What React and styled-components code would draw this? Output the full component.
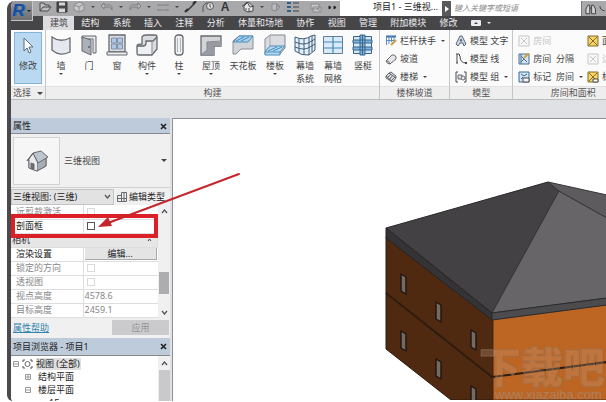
import React from 'react'
import styled, { createGlobalStyle, css } from 'styled-components'

const GlobalStyle = createGlobalStyle`
  * {
    box-sizing: border-box;
  }
  body {
    margin: 0;
    background: #fff;
    overflow: hidden;
  }
  body, button, input, select {
    font-family: 'Noto Sans', 'Noto Sans CJK SC', sans-serif;
    font-size: 9px;
    line-height: 12px;
    color: #444;
  }
  button {
    border: 0;
    padding: 0;
    background: none;
    white-space: nowrap;
  }
`

const Window = styled.div`
  position: relative;
  display: flex;
  flex-direction: column;
  height: calc(100vh - 2px);
  margin: 1px 0 1px 7px;
  border-left: 4px solid #4b494c;
  border-radius: 8px 0 0 6px;
  background: #dfe1e4;
  overflow: hidden;
`

/* title bar */

const TitleBar = styled.header`
  display: flex;
  height: 15px;
  background: #fff;
`

const AppButton = styled.button`
  position: absolute;
  top: 0;
  left: 0;
  width: 22px;
  height: 20px;
  display: flex;
  align-items: center;
  justify-content: center;
  gap: 2px;
  background: linear-gradient(#99999c, #6f6f73);
  border-right: 1px solid #c5c5c8;
  border-bottom: 1px solid #c5c5c8;
`

const Logo = styled.span`
  color: #174f9f;
  font: italic 900 17px/18px 'Liberation Sans', sans-serif;
  text-shadow: 1px 0 #2d76c8;
`

const QuickAccess = styled.div`
  display: flex;
  gap: 9px;
  padding-left: 27px;
  background: #a9a9ab;
`

const QuickGroup = styled.div`
  display: flex;
  align-items: center;
  gap: 3px;
  padding-bottom: 3px;
`

const QuickButton = styled.button`
  width: ${(props) => (props.$narrow ? '8px' : '14px')};
  height: 12px;
  display: flex;
  align-items: center;
  justify-content: center;
`

const GlyphA = styled.span`
  font: 700 12px/12px 'Liberation Sans', sans-serif;
  color: #353538;
`

const Caret = styled.span`
  display: block;
  border: 2px solid transparent;
  border-top-color: ${(props) => props.color || '#444'};
  border-bottom: 0;
  ${(props) =>
    props.$large &&
    css`
      border-width: 3px;
      border-bottom: 0;
    `}
`

const DocumentTitle = styled.span`
  width: 102px;
  padding-right: 4px;
  text-align: right;
  color: #222;
  white-space: nowrap;
`

const SearchToggle = styled.button`
  width: 9px;
  display: flex;
  align-items: center;
  justify-content: center;
  background: #59585b;
`

const SearchInput = styled.input`
  flex: 1;
  min-width: 0;
  border: 0;
  padding: 0 3px 2px;
  font-size: 8px;
  font-style: italic;
  background: #fff;
  &::placeholder {
    color: #8b8b8d;
  }
`

const SearchTools = styled.div`
  width: 25px;
  display: flex;
  align-items: center;
  gap: 3px;
  padding-left: 3px;
  background: #a9a9ab;
  border-left: 1px solid #77777a;
`

/* ribbon */

const TabBar = styled.nav`
  display: flex;
  padding-left: 32px;
  height: 14px;
  background: #464548;
`

const TabList = styled.div`
  display: flex;
  justify-content: space-between;
  flex: 0 0 454px;
`

const Tab = styled.button`
  padding: 0 6px 0 7px;
  display: flex;
  align-items: center;
  gap: 6px;
  color: ${(props) => (props.$active ? '#444' : '#ececee')};
  background: ${(props) => (props.$active ? '#dcdce0' : 'transparent')};
`

const Ribbon = styled.div`
  display: flex;
  flex: 0 0 70px;
  background: #fbfbfc;
  border-bottom: 1px solid #bcbdc0;
  overflow: hidden;
`

const RibbonPanel = styled.section`
  display: flex;
  flex: none;
  flex-direction: column;
  border-right: 1px solid #c4c5c8;
`

const PanelBody = styled.div`
  display: flex;
  flex: 1;
  padding: ${(props) => props.$pad || '2px 0 0 1px'};
`

const PanelLabel = styled.div`
  display: flex;
  align-items: center;
  justify-content: center;
  gap: 6px;
  height: 13px;
  background: #efeeef;
  border-top: 1px solid #e2e2e4;
  color: #555;
`

const ModifyButton = styled.button`
  width: 28px;
  height: 52px;
  display: flex;
  flex-direction: column;
  align-items: center;
  gap: 5px;
  padding-top: 4px;
  background: #b9d9f2;
  border: 1px solid #86b4d6;
`

const LargeButton = styled.button`
  width: ${(props) => (props.$wide ? '32px' : '28px')};
  display: flex;
  flex-direction: column;
  align-items: center;
  padding-top: 2px;
`

const LargeLabel = styled.span`
  margin: 3px 0 1px;
  line-height: 13px;
`

const Column = styled.div`
  display: flex;
  flex-direction: column;
`

const SmallButton = styled.button`
  height: 18px;
  display: flex;
  align-items: center;
  gap: 3px;
  white-space: pre;
  color: ${(props) => (props.disabled ? '#c3c3c5' : '#444')};
  & > svg {
    opacity: ${(props) => (props.disabled ? 0.35 : 1)};
  }
  & > span:last-child:not(:first-of-type) {
    margin-left: 2px;
  }
`

const AreaTools = styled.div`
  padding-left: 4px;
`

/* workspace */

const Workspace = styled.main`
  display: flex;
  flex: 1;
  min-height: 0;
  padding-top: 18px;
`

const Sidebar = styled.aside`
  flex: 0 0 159px;
  display: flex;
  flex-direction: column;
  background: #f0f0f1;
`

const Canvas = styled.section`
  flex: 1;
  min-width: 0;
  display: flex;
  justify-content: flex-end;
  margin-left: 2px;
  background: #fff;
  border-top: 1px solid #8e8f92;
  border-left: 1px solid #8e8f92;
  overflow: hidden;
  & > svg {
    flex: none;
  }
`

const PaletteHeader = styled.div`
  flex: none;
  display: flex;
  align-items: center;
  justify-content: space-between;
  height: ${(props) => (props.$tall ? '18px' : '16px')};
  padding: 1px 2px 0;
  background: #becbda;
  border-bottom: 1px solid #85898e;
  color: #222;
`

const CloseButton = styled.button`
  width: 9px;
  height: 9px;
  display: flex;
  align-items: center;
  justify-content: center;
`

const TypeSelector = styled.button`
  flex: none;
  height: 54px;
  display: flex;
  align-items: center;
  gap: 4px;
  padding: 0 3px 0 2px;
  border-bottom: 1px solid #d0d0d2;
  & > span:last-child {
    margin-left: auto;
  }
`

const Thumbnail = styled.span`
  width: 47px;
  height: 48px;
  display: flex;
  align-items: center;
  justify-content: center;
  background: #f6f6f7;
  border: 1px solid #d2d2d4;
`

const FilterRow = styled.div`
  flex: none;
  display: flex;
  gap: 3px;
  height: 17px;
  padding-top: 1px;
`

const InstanceSelect = styled.span`
  position: relative;
  width: 103px;
  & > select {
    width: 100%;
    height: 16px;
    appearance: none;
    padding: 0 1px;
    border: 1px solid #c4c4c6;
    border-radius: 0;
    background: #e2e2e3;
    color: #222;
  }
  & > svg {
    position: absolute;
    right: 3px;
    top: 5px;
    pointer-events: none;
  }
`

const EditType = styled.button`
  display: flex;
  align-items: center;
  gap: 2px;
  color: #222;
`

const PropertyArea = styled.div`
  flex: none;
  display: flex;
  background: #fff;
`

const PropertyTable = styled.table`
  flex: 1;
  border-collapse: collapse;
  table-layout: fixed;
  th,
  td {
    height: 14px;
    padding: 0 1px;
    border-bottom: 1px solid #dededf;
    line-height: 12px;
    font-weight: 400;
    text-align: left;
  }
  th {
    width: 72px;
    padding-left: 5px;
    border-right: 1px solid #dededf;
  }
`

const PropertyRow = styled.tr`
  color: ${(props) => (props.$muted ? '#87878a' : '#222')};
`

const GroupRow = styled.tr`
  background: #e6e6e7;
  && th {
    padding-left: 1px;
    color: #333;
  }
`

const GroupTitle = styled.span`
  display: flex;
  align-items: center;
  justify-content: space-between;
  padding-right: 4px;
`

const CheckBox = styled.input`
  display: block;
  appearance: none;
  width: 8px;
  height: 8px;
  margin: 0 0 0 2px;
  border: 1px solid ${(props) => (props.disabled ? '#dadadc' : '#555')};
  background: #fff;
`

const EditButton = styled.button`
  display: block;
  width: 100%;
  height: 12px;
  background: #e4e4e5;
  border-right: 1px solid #a9a9ab;
  border-bottom: 1px solid #a9a9ab;
  color: #222;
`

const ScrollBar = styled.div`
  width: 12px;
  display: flex;
  flex-direction: column;
  align-items: center;
  justify-content: space-between;
  padding: 4px 0 3px;
  background: #f0f0f1;
`

const Thumb = styled.span`
  width: 10px;
  height: 22px;
  margin-top: 42px;
  background: #adadaf;
`

const PaletteFooter = styled.div`
  flex: none;
  display: flex;
  align-items: center;
  justify-content: space-between;
  height: 20px;
  padding: 0 1px 0 2px;
  a {
    color: #3183ae;
  }
  button {
    width: 57px;
    height: 15px;
    background: #cbcbcd;
    color: #929294;
  }
`

const Browser = styled.div`
  flex: 1;
  min-height: 0;
  display: flex;
  background: #fff;
  overflow: hidden;
`

const Tree = styled.ul`
  flex: 1;
  margin: 0;
  padding: 2px 0 0 2px;
  list-style: none;
`

const TreeItem = styled.li`
  display: flex;
  align-items: center;
  gap: ${(props) => (props.$level ? '7px' : '3px')};
  height: 13px;
  padding-left: ${(props) => props.$level * 12}px;
  color: #222;
`

const TreeLabel = styled.span`
  padding-right: 1px;
  background: ${(props) => (props.$selected ? '#e0e0e1' : 'transparent')};
`

const BrowserScroll = styled.div`
  width: 12px;
  display: flex;
  flex-direction: column;
  align-items: center;
  gap: 4px;
  padding-top: 5px;
  background: #f0f0f1;
  & > span {
    flex: 1;
    width: 11px;
    background: #c9c9cb;
  }
`

const Callout = styled.svg`
  position: absolute;
  left: 0;
  top: 170px;
  pointer-events: none;
`

const Svg = ({ size = 12, w, h, children }) => (
  <svg
    width={w || size}
    height={h || size}
    viewBox={`0 0 ${w || size} ${h || size}`}
    fill="none"
    stroke="#67696e"
    aria-hidden="true"
  >
    {children}
  </svg>
)

const Cross = () => (
  <Svg size={7}>
    <path d="M1 1l5 5M6 1L1 6" stroke="#222" strokeWidth="1.6" />
  </Svg>
)

const Chevron = ({ up }) => (
  <Svg w={7} h={5}>
    <path d={up ? 'M1 4l2.500-3L6 4' : 'M1 1l2.500 3L6 1'} stroke="#505054" strokeWidth="1.200" />
  </Svg>
)

/* quick access glyphs, 14 x 12 */
const quick = {
  open: <path d="M2 10V2h4l1 2h4v2M2 10l3-4h8l-3 4z" stroke="#4a4a4c" fill="#bdbdc0" />,
  save: (
    <g stroke="#3c3c3f">
      <path d="M2 1h10v10H2z" fill="#47474b" />
      <path d="M4 1.500h6v3H4zM4 7.500h6V11H4z" fill="#d5d5d8" stroke="none" />
    </g>
  ),
  cube: (
    <g stroke="#8c8c8f">
      <path d="M2 4l5-3 5 2v6l-5 2-5-2z" fill="#c6c6c8" />
      <path d="M2 4l5 2 5-3M7 6v5" />
    </g>
  ),
  undo: <path d="M4 2L1 5l3 3V6h5q2 0 3 3V6q-1-2-3-2H4z" fill="#b8b8ba" stroke="#7c7c80" />,
  redo: <path d="M10 2l3 3-3 3V6H5Q3 6 2 9V6q1-2 3-2h5z" fill="#b8b8ba" stroke="#7c7c80" />,
  measure: <path d="M2 4h10M2 9h10M2 8v2M12 8v2M2 3v2M12 3v2" stroke="#808084" />,
  line: (
    <g stroke="#343437">
      <path d="M3 10l8-8" strokeWidth="1.400" />
      <path d="M1 11l3-3M9 3l3-3" strokeWidth="2.400" />
    </g>
  ),
  tag: (
    <g stroke="#555558">
      <path d="M2 11V5l3-3h3" />
      <circle cx="9" cy="5" r="3.500" fill="#dedee1" />
      <path d="M9 3v3h1" />
    </g>
  ),
  house: (
    <g stroke="#4a4a4d">
      <path d="M3 5l4-4 5 4v5l-5 1-4-2z" fill="#e4e4e8" />
      <path d="M1 5.500L6 1l3 5 4-1M8 7v4M5 7v2" />
    </g>
  ),
  gem: <path d="M3 3h4l4 3-4 4-4-1zM11 6l-3-3-1 7" stroke="#88888b" fill="#bfbfc2" />,
  list: (
    <g strokeWidth="2">
      <path d="M1 2h4M1 6h4M1 10h4" stroke="#29628f" />
      <path d="M7 2h6M7 6h6M7 10h6" stroke="#434347" strokeWidth="1.200" />
    </g>
  ),
  close: (
    <g stroke="#88888b">
      <path d="M2 3h8v5H2zM4 6h8v5H4z" fill="#c6c6c9" />
      <path d="M8 7l3 3" />
    </g>
  ),
  more: <path d="M3 5l2 1.500-2 1.500zM8 5l2 1.500-2 1.500z" fill="#222" stroke="#222" />,
}

/* large tool drawings, 22 x 22 */
const large = {
  wall: <path d="M2 3Q10 9 20 4v14Q10 23 2 16z" fill="#e5e8ee" strokeWidth="1.300" />,
  door: (
    <g>
      <path d="M4 2h14v17h-3V5H4z" fill="#e3e5e9" />
      <path d="M4 3l9 3v15l-9-4z" fill="#acb1b9" />
      <path d="M11 12v2" stroke="#333" />
    </g>
  ),
  window: (
    <g>
      <path d="M3 1h16v17H3z" fill="#dadde4" strokeWidth="1.300" />
      <path d="M5.500 4h5v5h-5zM11.500 4h5v5h-5zM5.500 10h5v5h-5zM11.500 10h5v5h-5z" fill="#aec7e6" stroke="#8390a3" />
      <path d="M1 18h20v3H1z" fill="#eceef0" />
    </g>
  ),
  component: (
    <g strokeWidth="1.300">
      <path d="M6 3q1-2 4-2h9q2 0 2 2v12l-5 6H3q-2 0-2-2v-7q0-2 5-2z" fill="#d9dce2" />
      <path d="M1 12h6q3 0 3-3V7h7l4-4" fill="none" />
      <path d="M2 13h6q3-1 3-4V8h5v12H3q-1 0-1-1z" fill="#eff0f3" stroke="none" />
      <path d="M16 8v12" stroke="#9b9ea4" />
    </g>
  ),
  column: (
    <g>
      <rect x="7" y="1" width="8" height="20" rx="3" fill="#eff0f3" strokeWidth="1.300" />
      <path d="M9.500 4v14M12.500 4v14" stroke="#b2b5bb" />
    </g>
  ),
  roof: (
    <g>
      <path d="M1 2h20v10h-7v9H1z" fill="#d2d4da" strokeWidth="1.300" />
      <path d="M1 21l6-5V8h14v4h-7v9z" fill="#979aa1" stroke="none" />
      <path d="M7 16V8l14-1M1 21l6-5" stroke="#85888e" />
    </g>
  ),
  ceiling: (
    <g>
      <path d="M1 7l6-5h14v13H9l-5 5H1z" fill="#d0d3d8" stroke="#8c8f95" />
      <path d="M1 8l6-6h14l-5 6z" fill="#a9d0ef" stroke="#498bb9" />
      <path d="M4 7l8-4M9 7l8-4" stroke="#498bb9" />
    </g>
  ),
  floor: (
    <g>
      <path d="M1 14V5l5-4h15v13l-5 6H1z" fill="#dadce1" stroke="#85898f" />
      <path d="M6 1v12h15M6 13l-5 4" stroke="#a8abb1" />
      <path d="M1 18l5-6h15l-5 6v3H1z" fill="#b5daf4" stroke="#498bb9" />
      <path d="M4 17l9-4M9 17l9-4M1 18h15" stroke="#498bb9" />
    </g>
  ),
  curtain: (
    <g stroke="#3d5d78">
      <path d="M1 3q9 4 16-1l4-1v15l-6 5Q8 22 1 17z" fill="#e5f0f9" />
      <path d="M1 8q9 4 15 0l5-3M1 13q9 4 15 0l5-3M5 4v15M10 5v15M15 3v18M18 2v16" />
    </g>
  ),
  grid: (
    <g stroke="#647e94">
      <path d="M1.500 2.500h19v17h-19z" fill="#d9eafa" />
      <path d="M11 2v18M1 8h20M1 14h20" stroke="#4487b4" strokeWidth="1.200" />
    </g>
  ),
  mullion: (
    <g stroke="#38658a">
      <path d="M1.500 2.500h18v17h-18z" fill="#d2e7f7" />
      <path d="M8 1h5v20H8zM1 6h19v3H1zM1 13h19v3H1z" fill="#7eb5de" />
      <path d="M10.500 1v20" />
    </g>
  ),
}

/* small tool drawings, 12 x 12 */
const small = {
  railing: (
    <g>
      <path d="M1 1.500h10" stroke="#2f6ba3" strokeWidth="2" />
      <path d="M1 5.500h9M1.500 1v9M4 1v8M6.500 1v6M9 1v5" stroke="#5a8dbb" />
      <path d="M6 10l5-5" stroke="#c89b45" strokeWidth="2" />
    </g>
  ),
  ramp: <path d="M1 8l6-6q3-1 4 2v2l-6 5q-3 0-4-3zM1 8q3-1 4 3" fill="#e7e8eb" />,
  stair: <path d="M1 5l3-3 7 5-3 4zM2 7l4-4M4 9l4-5M6 10l4-4M1 5v2l6 4M4 2l2-1 5 4v2" fill="#d9dade" />,
  text: <path d="M1 9L5 1h2l4 8-2 2-1-3H5l-2 3zM5 6h2L6 4z" fill="#d1d8e0" stroke="#51677c" />,
  modelLine: (
    <g stroke="#47484b">
      <path d="M2 1v9M5 3q0 7 6 7M1 1h3M1 10h2" />
      <path d="M4 2h1M10 10h2" strokeWidth="2" />
    </g>
  ),
  group: (
    <g>
      <path d="M3 1H1v10h2M9 1h2v10H9" stroke="#47484b" />
      <path d="M3 4h4v4H3z" fill="#dfe5ee" />
      <circle cx="8" cy="7" r="2" fill="#e6e8eb" />
    </g>
  ),
  room: <path d="M1 1h10v10H1zM3 3l6 6M9 3L3 9" fill="#f1f1f2" />,
  separate: (
    <g stroke="#4a6f92">
      <path d="M1 1h10v10H1z" fill="#d3e3f1" />
      <path d="M3 3l6 6M3 9l3-3M3 1v10" />
      <path d="M6 5l5-5" stroke="#d0a43c" strokeWidth="2" />
    </g>
  ),
  tagRoom: (
    <g stroke="#376b9b">
      <path d="M1 1h10v10H1z" fill="#d3e3f1" />
      <path d="M3 3l3 2 3-2M3 8l2-2" />
      <path d="M5 7h6v4H5z" fill="#f7f7f8" stroke="#4a4c50" />
    </g>
  ),
  area: <path d="M1 1h10v10H1zM2 2l8 8M10 2l-8 8" fill="#f6d667" stroke="#83692a" />,
  tagArea: (
    <g stroke="#83692a">
      <path d="M1 1h10v10H1zM2 2l8 8M10 2l-8 8" fill="#f6d667" />
      <path d="M6 8h5v3H6z" fill="#fff" stroke="#4a4c50" />
    </g>
  ),
}

const quickGroups = [
  ['open', 'save', 'cube', '', 'undo', '', 'redo', '', 'measure', '', 'line', 'tag', 'A'],
  ['house', '', 'gem', 'list'],
  ['close', 'more'],
]

const tabs = ['建筑', '结构', '系统', '插入', '注释', '分析', '体量和场地', '协作', '视图', '管理', '附加模块', '修改']

const buildTools = [
  { icon: 'wall', label: '墙', menu: true },
  { icon: 'door', label: '门' },
  { icon: 'window', label: '窗' },
  { icon: 'component', label: '构件', menu: true, wide: true },
  { icon: 'column', label: '柱', menu: true, wide: true },
  { icon: 'roof', label: '屋顶', menu: true, wide: true },
  { icon: 'ceiling', label: '天花板', wide: true },
  { icon: 'floor', label: '楼板', menu: true, wide: true },
  { icon: 'curtain', label: '幕墙', second: '系统' },
  { icon: 'grid', label: '幕墙', second: '网格' },
  { icon: 'mullion', label: '竖梃', wide: true },
]

const ToolColumn = ({ tools }) => (
  <Column>
    {tools.map(([icon, label, menu, disabled]) => (
      <SmallButton key={label} disabled={disabled}>
        <Svg>{small[icon]}</Svg>
        <span>{label}</span>
        {menu && <Caret />}
      </SmallButton>
    ))}
  </Column>
)

const QuickItem = ({ name }) => {
  if (!name) {
    return (
      <QuickButton $narrow aria-label="menu">
        <Caret />
      </QuickButton>
    )
  }
  return (
    <QuickButton aria-label={name}>
      {name === 'A' ? (
        <GlyphA>A</GlyphA>
      ) : (
        <Svg w={14} h={12}>
          {quick[name]}
        </Svg>
      )}
    </QuickButton>
  )
}

const Header = () => (
  <>
    <TitleBar>
      <QuickAccess>
        {quickGroups.map((group, i) => (
          <QuickGroup key={i}>
            {group.map((name, j) => (
              <QuickItem key={j} name={name} />
            ))}
          </QuickGroup>
        ))}
      </QuickAccess>
      <DocumentTitle>项目1 - 三维视...</DocumentTitle>
      <SearchToggle aria-label="search options">
        <Svg w={4} h={6}>
          <path d="M0 0l4 3-4 3z" fill="#fff" stroke="none" />
        </Svg>
      </SearchToggle>
      <SearchInput type="text" aria-label="search" placeholder="键入关键字或短语" />
      <SearchTools>
        <Svg w={12} h={12}>
          <path d="M1 11V6l2-4h2v9zM11 11V6L9 2H7v9zM5 5h2" fill="#d6d6d9" stroke="#3b3b3e" />
        </Svg>
        <Svg w={7} h={10}>
          <path d="M1 2q0 4 5 5" stroke="#3b3b3e" />
        </Svg>
      </SearchTools>
    </TitleBar>
    <TabBar>
      <TabList>
        {tabs.map((tab, i) => (
          <Tab key={tab} $active={i === 0}>
            {tab}
          </Tab>
        ))}
        <Tab aria-label="display">
          <Svg w={10} h={6}>
            <rect width="10" height="6" rx="1" fill="#ececee" stroke="none" />
            <path d="M3 4l2-2 2 2z" fill="#464548" stroke="none" />
          </Svg>
          <Caret color="#ececee" />
        </Tab>
      </TabList>
    </TabBar>
    <AppButton aria-label="application menu">
      <Logo>R</Logo>
      <Caret color="#222" />
    </AppButton>
  </>
)

const Tools = () => (
  <Ribbon>
    <RibbonPanel>
      <PanelBody $pad="2px 3px 0">
        <ModifyButton>
          <Svg w={12} h={18}>
            <path d="M2 1v13l3-3 2 5 2-1-2-5h4z" fill="#fff" stroke="#5b6b78" />
          </Svg>
          修改
        </ModifyButton>
      </PanelBody>
      <PanelLabel>
        选择 <Caret $large />
      </PanelLabel>
    </RibbonPanel>
    <RibbonPanel>
      <PanelBody>
        {buildTools.map((tool) => (
          <LargeButton key={tool.icon} $wide={tool.wide}>
            <Svg size={22}>{large[tool.icon]}</Svg>
            <LargeLabel>
              {tool.label}
              {tool.second && (
                <>
                  <br />
                  {tool.second}
                </>
              )}
            </LargeLabel>
            {tool.menu && <Caret />}
          </LargeButton>
        ))}
      </PanelBody>
      <PanelLabel>构建</PanelLabel>
    </RibbonPanel>
    <RibbonPanel>
      <PanelBody $pad="2px 4px 0 5px">
        <ToolColumn
          tools={[
            ['railing', '栏杆扶手', true],
            ['ramp', '坡道'],
            ['stair', '楼梯', true],
          ]}
        />
      </PanelBody>
      <PanelLabel>楼梯坡道</PanelLabel>
    </RibbonPanel>
    <RibbonPanel>
      <PanelBody $pad="2px 4px 0 5px">
        <ToolColumn
          tools={[
            ['text', '模型 文字'],
            ['modelLine', '模型 线'],
            ['group', '模型 组', true],
          ]}
        />
      </PanelBody>
      <PanelLabel>模型</PanelLabel>
    </RibbonPanel>
    <RibbonPanel>
      <PanelBody $pad="2px 4px 0 5px">
        <ToolColumn
          tools={[
            ['room', '房间', false, true],
            ['separate', '房间  分隔'],
            ['tagRoom', '标记  房间', true],
          ]}
        />
        <AreaTools>
          <ToolColumn
            tools={[
              ['area', '面积', true],
              ['room', '边界', false, true],
              ['tagArea', '标记', true],
            ]}
          />
        </AreaTools>
      </PanelBody>
      <PanelLabel>房间和面积</PanelLabel>
    </RibbonPanel>
  </Ribbon>
)

const Properties = () => (
  <>
    <PaletteHeader>
      属性
      <CloseButton aria-label="close">
        <Cross />
      </CloseButton>
    </PaletteHeader>
    <TypeSelector>
      <Thumbnail>
        <Svg size={24}>
          <path d="M4 11v8l8 3 9-5V9l-9 3z" fill="#dce0e5" />
          <path d="M12 13v9l9-5V9z" fill="#a8adb5" />
          <path d="M2 12l6-8 8-2 7 6-10 6-5-9z" fill="#bfc5cc" />
          <path d="M4 12l4-7 4 8v9l-8-3z" fill="#e8eaed" stroke="none" />
          <path d="M2 12l6-8 5 10M4 11v8l8 3" />
          <path d="M6 14l3 1v5l-3-1z" fill="#6a6d73" />
        </Svg>
      </Thumbnail>
      <span>三维视图</span>
      <Caret $large />
    </TypeSelector>
    <FilterRow>
      <InstanceSelect>
        <select aria-label="三维视图">
          <option>三维视图: (三维)</option>
        </select>
        <Chevron />
      </InstanceSelect>
      <EditType>
        <Svg size={10}>
          <path d="M.5 3.500h4v6h-4zM4.500.5h5v9h-5zM.5 6.500h9M7 1v8" fill="#eef0f3" />
        </Svg>
        编辑类型
      </EditType>
    </FilterRow>
    <PropertyArea>
      <PropertyTable>
        <tbody>
          <PropertyRow $muted>
            <th>
              <label htmlFor="clip">远剪裁激活</label>
            </th>
            <td>
              <CheckBox id="clip" type="checkbox" disabled />
            </td>
          </PropertyRow>
          <PropertyRow>
            <th>
              <label htmlFor="section">剖面框</label>
            </th>
            <td>
              <CheckBox id="section" type="checkbox" />
            </td>
          </PropertyRow>
          <GroupRow>
            <th colSpan="2">
              <GroupTitle>
                相机
                <Svg w={5} h={4}>
                  <path d="M1 3l1.500-2L4 3" stroke="#444" />
                </Svg>
              </GroupTitle>
            </th>
          </GroupRow>
          <PropertyRow>
            <th>渲染设置</th>
            <td>
              <EditButton>编辑...</EditButton>
            </td>
          </PropertyRow>
          <PropertyRow $muted>
            <th>
              <label htmlFor="locked">锁定的方向</label>
            </th>
            <td>
              <CheckBox id="locked" type="checkbox" disabled />
            </td>
          </PropertyRow>
          <PropertyRow $muted>
            <th>
              <label htmlFor="perspective">透视图</label>
            </th>
            <td>
              <CheckBox id="perspective" type="checkbox" disabled />
            </td>
          </PropertyRow>
          <PropertyRow $muted>
            <th>视点高度</th>
            <td>4578.6</td>
          </PropertyRow>
          <PropertyRow $muted>
            <th>目标高度</th>
            <td>2459.1</td>
          </PropertyRow>
        </tbody>
      </PropertyTable>
      <ScrollBar>
        <Chevron up />
        <Thumb />
        <Chevron />
      </ScrollBar>
    </PropertyArea>
    <PaletteFooter>
      <a href="#help">属性帮助</a>
      <button disabled>应用</button>
    </PaletteFooter>
  </>
)

const Expander = ({ open }) => (
  <Svg size={6}>
    <path d={open ? 'M.5.5h5v5h-5zM1 3h4' : 'M.5.5h5v5h-5zM1 3h4M3 1v4'} stroke="#9a9a9d" />
  </Svg>
)

const ProjectBrowser = () => (
  <>
    <PaletteHeader $tall>
      项目浏览器 - 项目1
      <CloseButton aria-label="close">
        <Cross />
      </CloseButton>
    </PaletteHeader>
    <Browser>
      <Tree>
        <TreeItem $level={0}>
          <Expander open />
          <Svg w={11} h={10}>
            <path d="M1 3V1h2M8 1h2v2M1 7v2h2M8 9h2V7" stroke="#555" />
            <circle cx="5.500" cy="5" r="2.500" />
          </Svg>
          <TreeLabel $selected>视图 (全部)</TreeLabel>
        </TreeItem>
        <TreeItem $level={1}>
          <Expander />
          <TreeLabel>结构平面</TreeLabel>
        </TreeItem>
        <TreeItem $level={1}>
          <Expander open />
          <TreeLabel>楼层平面</TreeLabel>
        </TreeItem>
        <TreeItem $level={3}>
          <TreeLabel>1F</TreeLabel>
        </TreeItem>
      </Tree>
      <BrowserScroll>
        <Chevron up />
        <span />
      </BrowserScroll>
    </Browser>
  </>
)

const windows = [
  [401, 275],
  [436, 303],
  [471, 331],
  [401, 332],
  [436, 360],
  [471, 387],
]

const Building = () => (
  <svg width="226" height="281" viewBox="380 120 226 281" strokeLinejoin="round">
    <path d="M386 238l107 82v81h-42l-65-51z" fill="#502a10" stroke="#2c1a0e" />
    <path d="M493 320l114-15v96H493z" fill="#bd6522" stroke="#4a2a12" />
    <path d="M386 229l162-46 11 9-67 122z" fill="#434144" stroke="#29282a" />
    <path d="M559 192l48 27v80l-115 15z" fill="#676568" stroke="#363537" />
    <path d="M548 183l59 13v23l-48-27z" fill="#5d5b5e" stroke="#363537" />
    <path d="M386 229l106 85v7l-106-82z" fill="#343335" stroke="#242325" />
    <path d="M492 314l115-15v7l-115 15z" fill="#4c4b4e" stroke="#2b2a2c" />
    <path d="M386 294l106 84 115-15" fill="none" stroke="#2d1c12" strokeWidth="2" />
    {windows.map(([x, y]) => (
      <path key={`${x}-${y}`} d={`M${x} ${y}l5 3v17l-5-3z`} fill="#766960" stroke="#1c1512" strokeWidth="1.400" />
    ))}
    <g fill="#c7a082" fillOpacity=".3" stroke="#96745a" strokeOpacity=".6">
      <text x="479" y="384" fontSize="42" fontWeight="900" fontFamily="'Noto Sans CJK SC', sans-serif">
        下载吧
      </text>
      <text x="495" y="400" fontSize="13" fillOpacity=".5" strokeWidth=".5" fontFamily="'Liberation Sans', sans-serif">
        www.xiazaiba.com
      </text>
    </g>
  </svg>
)

const App = () => {
  return (
    <>
      <GlobalStyle />
      <Window>
        <Header />
        <Tools />
        <Workspace>
          <Sidebar>
            <Properties />
            <ProjectBrowser />
          </Sidebar>
          <Canvas>
            <Building />
          </Canvas>
        </Workspace>
        <Callout width="232" height="70" viewBox="11 171 232 70" fill="none" aria-hidden="true">
          <rect x="13" y="216" width="143" height="20" stroke="#dc2027" strokeWidth="4" />
          <path d="M239 174L108 223" stroke="#c4262c" strokeWidth="2" strokeLinecap="round" />
          <path d="M98 227l10-10 4 9z" fill="#c4262c" />
        </Callout>
      </Window>
    </>
  )
}

export default App
